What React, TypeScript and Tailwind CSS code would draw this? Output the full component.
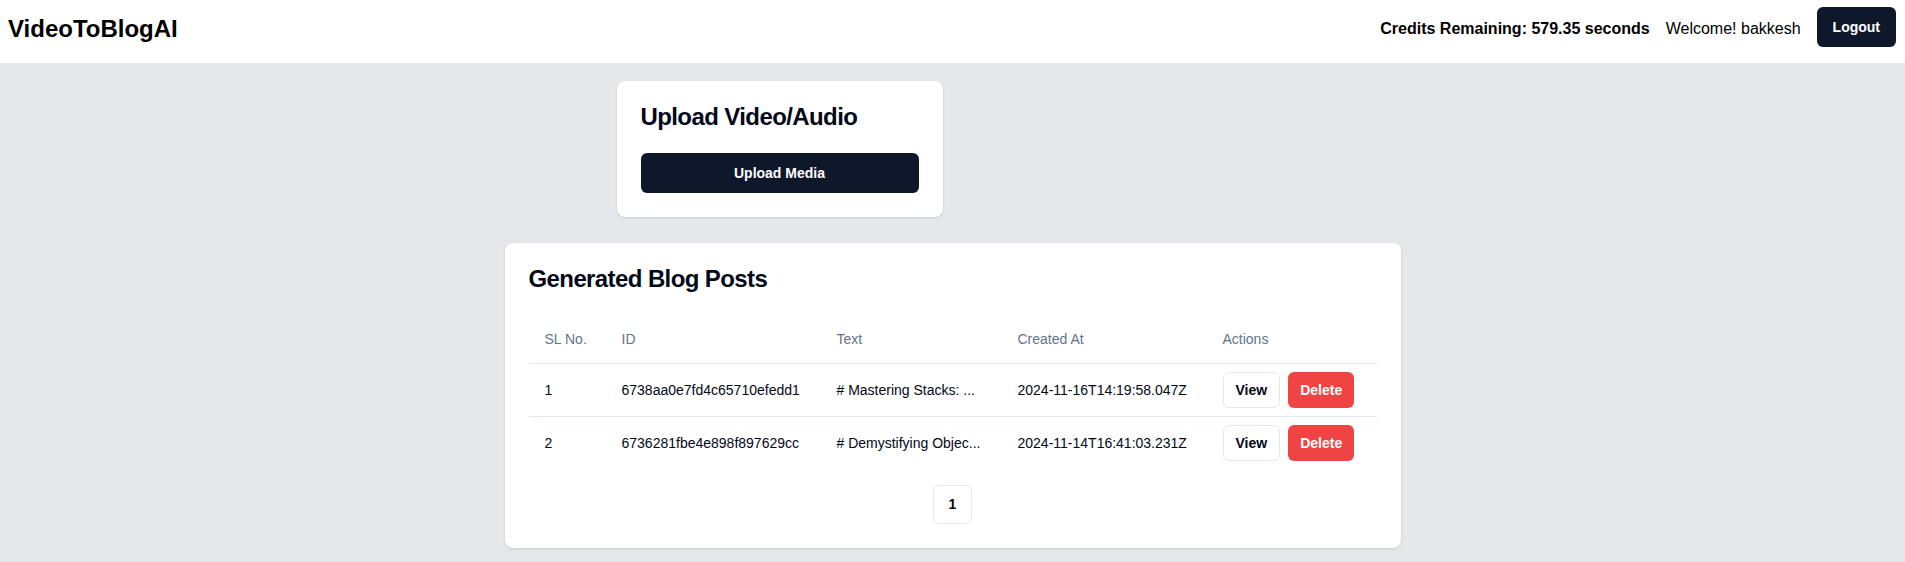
import React from "react";

interface Post {
  id: string;
  text: string;
  createdAt: string;
}

const posts: Post[] = [
  { id: "6738aa0e7fd4c65710efedd1", text: "# Mastering Stacks: ...", createdAt: "2024-11-16T14:19:58.047Z" },
  { id: "6736281fbe4e898f897629cc", text: "# Demystifying Objec...", createdAt: "2024-11-14T16:41:03.231Z" },
];

export default function App() {
  return (
    <div className="min-h-screen bg-[#e5e7eb] font-['Liberation_Sans',Arial,sans-serif] text-[#020817]">
      {/* Navbar */}
      <header className="flex h-[63px] items-start justify-between bg-white px-2 pt-[7px]">
        <div className="flex h-10 items-center">
          <h1 className="mt-1 text-2xl leading-8 font-bold text-black">VideoToBlogAI</h1>
        </div>
        <div className="flex h-10 items-center gap-4 pr-[1px]">
          <span className="mt-[3px] text-base font-bold text-black">Credits Remaining: 579.35 seconds</span>
          <span className="mt-[3px] text-base text-black">Welcome! bakkesh</span>
          <button className="h-10 rounded-md bg-[#0f172a] px-4 text-sm font-bold text-white">Logout</button>
        </div>
      </header>

      <main className="px-4 pt-[18px] pb-6">
        <div className="mx-auto grid max-w-4xl grid-cols-2 gap-5">
          <div className="w-[326px] justify-self-end rounded-lg bg-white shadow-sm">
            <div className="p-6">
              <h2 className="text-2xl leading-none font-semibold tracking-tight">Upload Video/Audio</h2>
            </div>
            <div className="px-6 pb-6">
              <button className="h-10 w-full rounded-md bg-[#0f172a] text-sm font-bold text-white">Upload Media</button>
            </div>
          </div>
        </div>

        <div className="mx-auto mt-[26px] max-w-4xl rounded-lg bg-white shadow-sm">
          <div className="p-6">
            <h2 className="text-2xl leading-none font-semibold tracking-tight">Generated Blog Posts</h2>
          </div>
          <div className="px-6 pb-6">
            <table className="w-full table-fixed text-sm">
              <colgroup>
                <col className="w-[77px]" />
                <col className="w-[215px]" />
                <col className="w-[181px]" />
                <col className="w-[205px]" />
                <col />
              </colgroup>
              <thead>
                <tr className="border-b border-[#e2e8f0]">
                  <th className="h-12 px-4 pt-[1px] text-left align-middle font-medium text-[#64748b]">SL No.</th>
                  <th className="h-12 px-4 pt-[1px] text-left align-middle font-medium text-[#64748b]">ID</th>
                  <th className="h-12 px-4 pt-[1px] text-left align-middle font-medium text-[#64748b]">Text</th>
                  <th className="h-12 px-4 pt-[1px] text-left align-middle font-medium text-[#64748b]">Created At</th>
                  <th className="h-12 px-4 pt-[1px] text-left align-middle font-medium text-[#64748b]">Actions</th>
                </tr>
              </thead>
              <tbody>
                {posts.map((post, i) => (
                  <tr key={post.id} className={i < posts.length - 1 ? "border-b border-[#e2e8f0]" : ""}>
                    <td className="px-4 py-2 align-middle">{i + 1}</td>
                    <td className="px-4 py-2 align-middle">{post.id}</td>
                    <td className="px-4 py-2 align-middle whitespace-nowrap">{post.text}</td>
                    <td className="px-4 py-2 align-middle">{post.createdAt}</td>
                    <td className="px-4 py-2 align-middle">
                      <div className="flex items-center gap-2">
                        <button className="h-9 rounded-md border border-[#e2e8f0] bg-white px-3 text-sm font-bold">View</button>
                        <button className="h-9 rounded-md bg-[#ef4444] px-3 text-sm font-bold text-white">Delete</button>
                      </div>
                    </td>
                  </tr>
                ))}
              </tbody>
            </table>

            <div className="mt-4 flex justify-center">
              <button className="h-[39px] w-[39px] rounded-md border border-[#e2e8f0] bg-white text-sm font-bold">1</button>
            </div>
          </div>
        </div>
      </main>
    </div>
  );
}
